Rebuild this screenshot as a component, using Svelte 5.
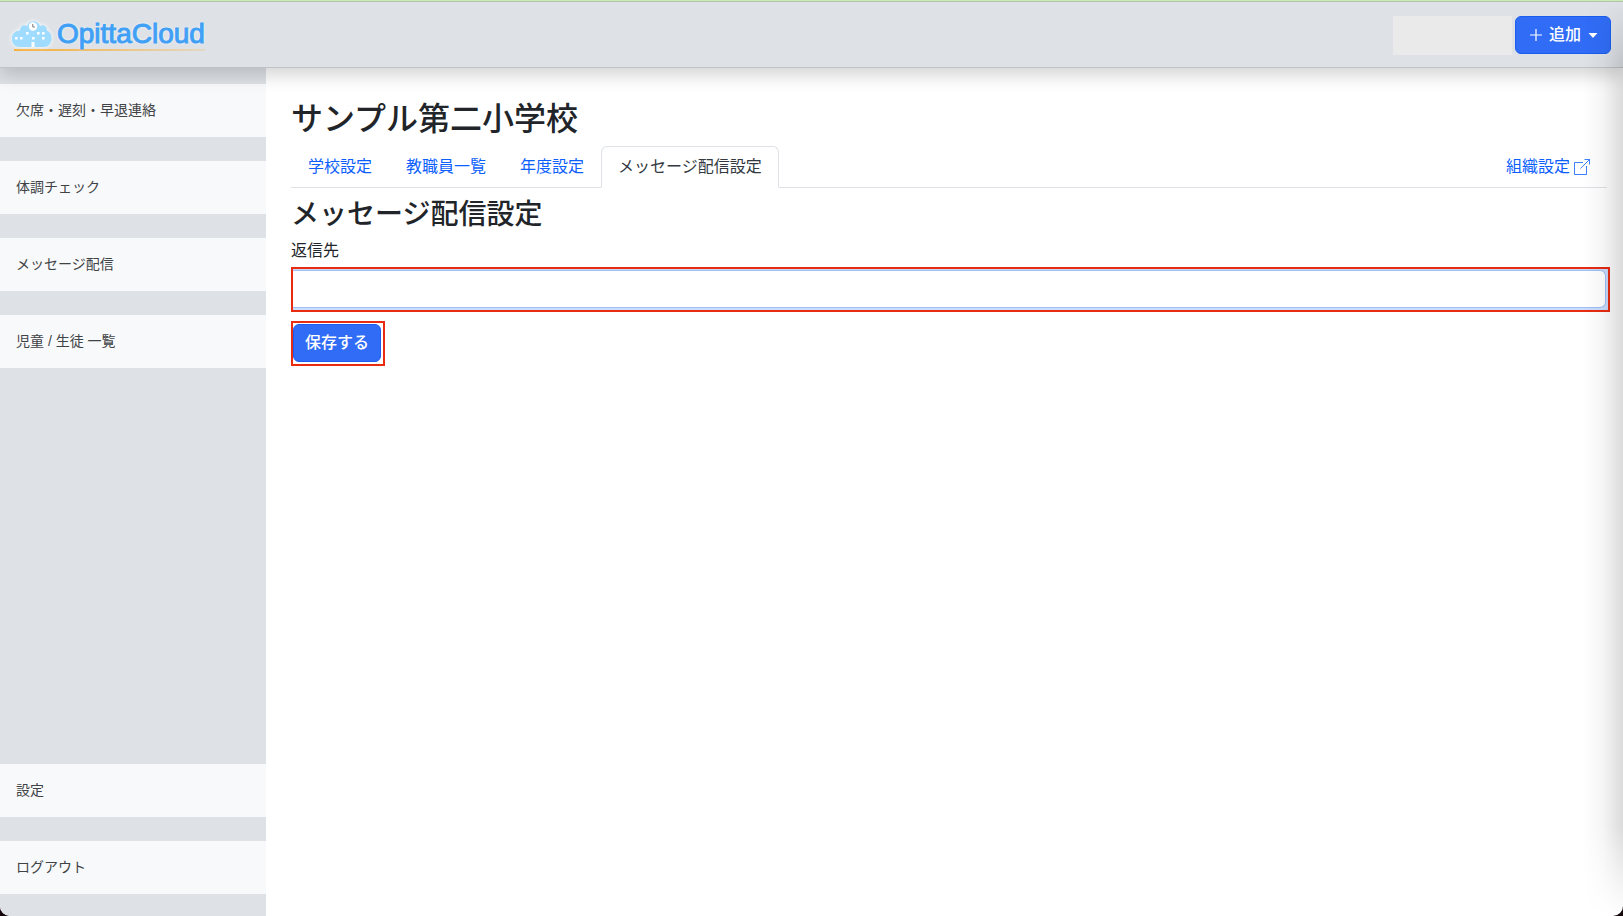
<script>
  const mainLinks = ['欠席・遅刻・早退連絡', '体調チェック', 'メッセージ配信', '児童 / 生徒 一覧'];
  const accountLinks = ['設定', 'ログアウト'];
  const tabs = ['学校設定', '教職員一覧', '年度設定', 'メッセージ配信設定'];
  let active = $state('メッセージ配信設定');
  let replyTo = $state('');
  const windows = [
    [16, 38], [21, 38], [27, 33], [33, 38], [38, 33], [43, 33], [43, 38]
  ];
</script>

<div class="page">
  <header>
    <a class="brand" href="#home">
      <svg class="cloud" width="40" height="30" viewBox="12 19 40 30" aria-hidden="true">
        <path d="M20 47 C9 47 9 31 20 30.500 C20 26 24 24 27 26 C29 19.500 38 19.500 40 26 C44 24 47 27 47 30.500 C54 33 53 47 44 47 Z" fill="#9fdcff" />
        {#each windows as [x, y]}
          <rect x={x - 1} y={y - 1} width="2.600" height="2.600" rx=".5" fill="#fff" />
        {/each}
        <path d="M31.500 42 H34.500 V47 H31.500 Z" fill="#fff" />
        <circle cx="33" cy="26.500" r="4.200" fill="#fff" />
        <path d="M32.800 24 V27 H34.800" fill="none" stroke="#777" stroke-width="1" />
      </svg>
      <span>OpittaCloud</span>
    </a>
    <div class="actions">
      <div class="account"></div>
      <button class="btn add" type="button">
        <svg width="12" height="12" viewBox="0 0 12 12" aria-hidden="true"><path d="M6 0 V12 M0 6 H12" stroke="#fff" stroke-width="1.200" /></svg>
        追加
        <svg class="caret" width="10" height="5" viewBox="0 0 10 5" aria-hidden="true"><path d="M.5 0 H9.500 L5 5 Z" fill="#fff" /></svg>
      </button>
    </div>
  </header>

  <div class="body">
    <nav class="side">
      {#each mainLinks as label}
        <a href="#menu">{label}</a>
      {/each}
      <div class="space"></div>
      {#each accountLinks as label}
        <a href="#account">{label}</a>
      {/each}
    </nav>

    <main>
      <h1>サンプル第二小学校</h1>
      <div class="tabs">
        {#each tabs as tab}
          <button type="button" class:active={tab === active} onclick={() => (active = tab)}>{tab}</button>
        {/each}
        <a class="org" href="#organization">組織設定
          <svg width="16" height="16" viewBox="0 0 16 16" fill="none" stroke="currentColor" stroke-width=".8" aria-hidden="true"><path d="M9 3.500 H.5 V15.500 H12.500 V7 M10.500 .5 H15.500 V5.500 M15.500 .5 L6.500 9.500" /></svg>
        </a>
      </div>
      <h2>メッセージ配信設定</h2>
      <form onsubmit={(e) => e.preventDefault()}>
        <label for="reply-to">返信先</label>
        <div class="mark field"><input id="reply-to" type="email" bind:value={replyTo} /></div>
        <div class="mark submit"><button class="btn save" type="submit">保存する</button></div>
      </form>
    </main>
  </div>
  <div class="edge"></div>
</div>

<style>
  :global(body) {
    margin: 0;
    background: #14060a;
  }
  * {
    box-sizing: border-box;
  }
  .page {
    position: relative;
    display: flex;
    flex-direction: column;
    min-height: 100vh;
    overflow: hidden;
    border-radius: 0 0 10px 10px;
    background: #fff;
    color: #212529;
    font-family: "Liberation Sans", "Noto Sans CJK JP", sans-serif;
    font-size: 16px;
    line-height: 24px;
  }
  a {
    color: inherit;
    text-decoration: none;
  }
  button {
    font: inherit;
    cursor: pointer;
  }
  header {
    position: relative;
    z-index: 1;
    display: flex;
    align-items: center;
    justify-content: space-between;
    height: 68px;
    padding: 2px 12px 0;
    border-top: 1px solid #cdeab8;
    border-bottom: 1px solid #bfc3c6;
    background: #dee2e6;
    box-shadow: inset 0 1px #b4c3ab, 0 8px 16px rgba(0, 0, 0, 0.16);
  }
  .brand {
    display: flex;
    align-items: center;
    gap: 5px;
    padding-bottom: 2px;
    background: linear-gradient(90deg, #f7ae35, #f7ae3533) right bottom / calc(100% - 2px) 2px no-repeat;
    color: #3fa0f6;
    font-size: 28px;
    line-height: 30px;
    text-shadow: 0 0 3px #fff;
    -webkit-text-stroke: 1px #3fa0f6;
  }
  .cloud {
    filter: drop-shadow(0 0 2px #fff);
  }
  .actions {
    display: flex;
    align-items: center;
    gap: 3px;
  }
  .account {
    width: 119px;
    height: 39px;
    background: #eaeaea;
  }
  .btn {
    height: 38px;
    padding: 0 11px;
    border: 1px solid #1a5df0;
    border-radius: 6px;
    background: #306cf5;
    color: #fff;
    font-weight: 500;
  }
  .add {
    display: flex;
    align-items: center;
    gap: 7px;
    padding: 0 12px 0 14px;
  }
  .body {
    display: flex;
    flex: 1;
  }
  .side {
    display: flex;
    flex: 0 0 266px;
    flex-direction: column;
    gap: 24px;
    padding: 16px 0 22px;
    background: #dee2e6;
    font-size: 14px;
  }
  .side a {
    height: 53px;
    padding: 0 16px;
    background: #f8f9fa;
    color: #404346;
    line-height: 53px;
  }
  .space {
    flex: 1;
  }
  main {
    flex: 1;
    padding: 32px 13px 24px 25px;
  }
  h1,
  h2 {
    margin: 0;
    font-weight: 500;
  }
  h1 {
    font-size: 32px;
    line-height: 38px;
  }
  h2 {
    margin: 10px 0 7px;
    font-size: 28px;
    line-height: 34px;
  }
  .tabs {
    display: flex;
    margin: 8px 3px 0 0;
    box-shadow: inset 0 -1px #dee2e6;
  }
  .tabs button {
    height: 42px;
    padding: 0 16px;
    border: 1px solid transparent;
    border-radius: 6px 6px 0 0;
    background: none;
    color: #0d5ffd;
  }
  .tabs button.active {
    border-color: #dee2e6;
    border-bottom-color: #fff;
    background: #fff;
    color: #33393f;
  }
  .org {
    display: flex;
    align-items: center;
    gap: 4px;
    margin-left: auto;
    padding: 0 17px;
    color: #0d5ffd;
  }
  form {
    display: flex;
    flex-direction: column;
    align-items: flex-start;
  }
  .mark {
    border: 2px solid #e92b12;
  }
  .field {
    width: 100%;
    margin: 4px 0 9px;
    background: #c9dcfb;
    padding: 1px 2px 2px 0;
  }
  input {
    display: block;
    width: 100%;
    height: 38px;
    padding: 6px 12px;
    border: 1px solid #9fbff5;
    border-left: 0;
    border-radius: 0 6px 6px 0;
    outline: none;
    background: #fff;
    font: inherit;
  }
  .submit {
    padding: 1px 2px 2px 0;
  }
  .save {
    display: block;
  }
  .edge {
    position: absolute;
    inset: 0 0 0 auto;
    z-index: 2;
    width: 40px;
    background: linear-gradient(90deg, transparent, rgba(0, 0, 0, 0.04) 50%, rgba(0, 0, 0, 0.14));
    mask-image: linear-gradient(transparent, #000 70px, #000 calc(100% - 90px), transparent);
    pointer-events: none;
  }
</style>
